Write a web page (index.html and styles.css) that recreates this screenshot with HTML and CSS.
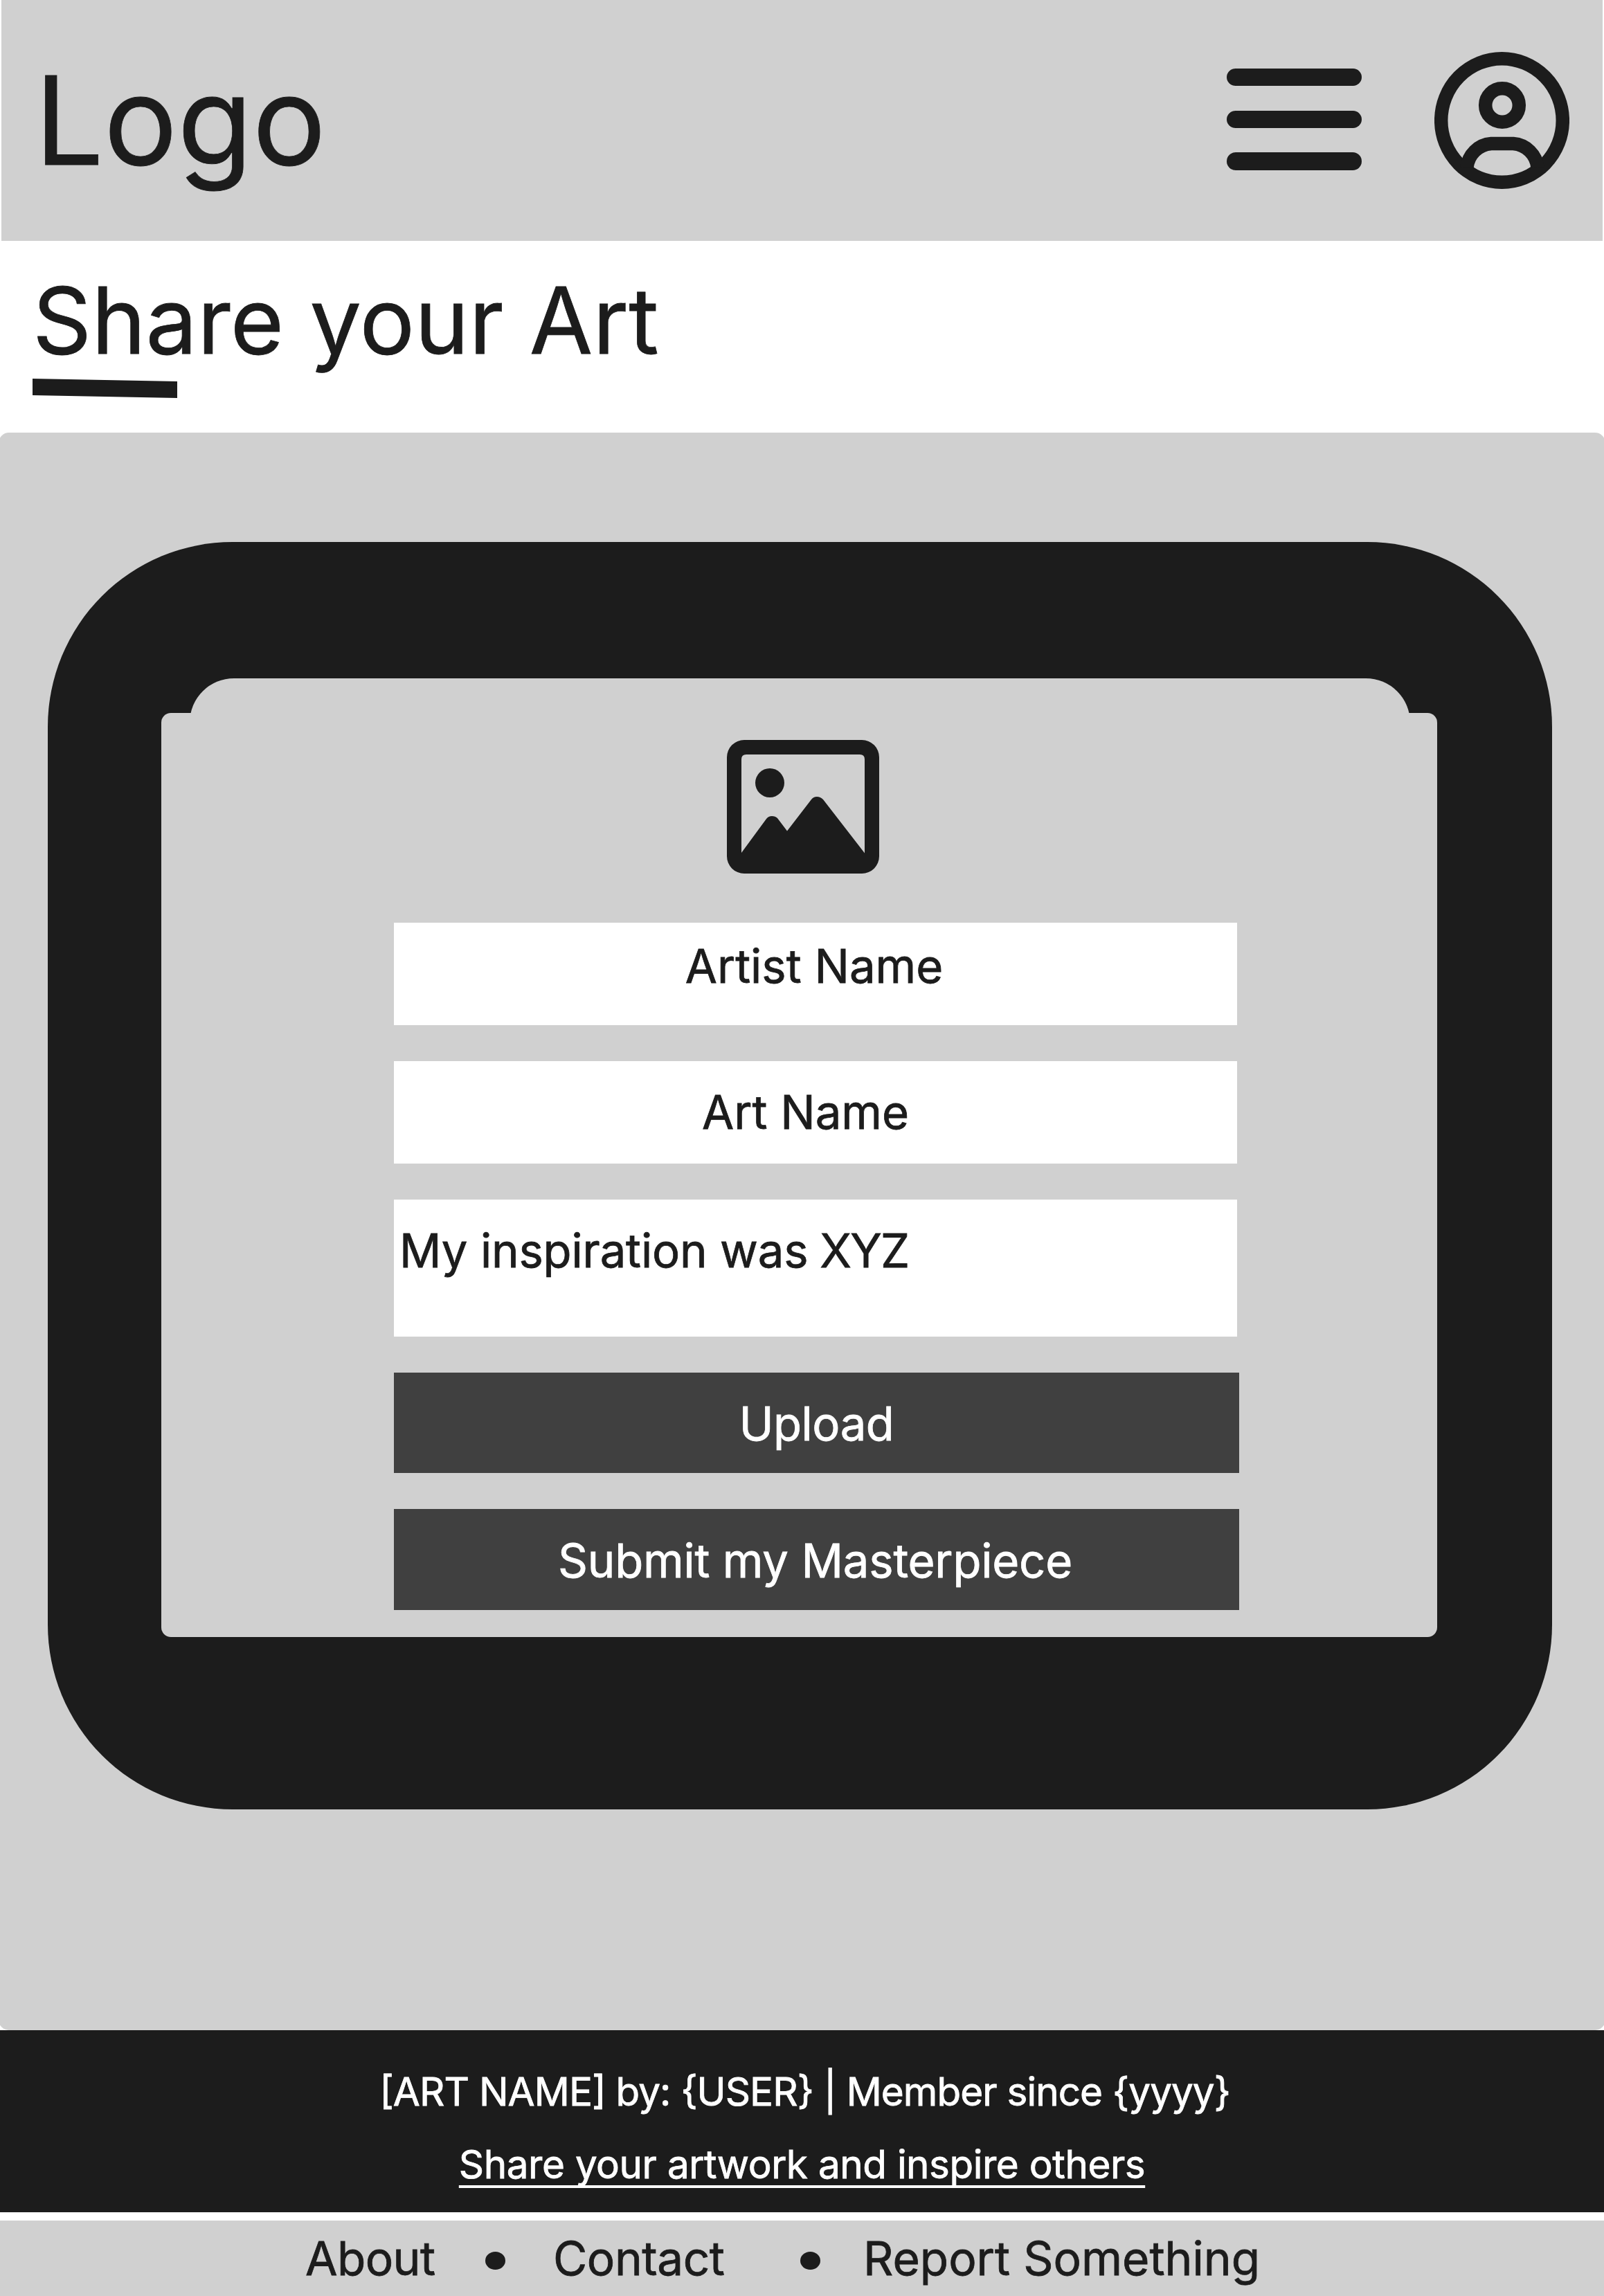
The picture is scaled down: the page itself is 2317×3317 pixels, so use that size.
FILE: index.html
```html
<!DOCTYPE html>
<html lang="en">
<head>
<meta charset="utf-8">
<title>Share your Art</title>
<link rel="stylesheet" href="styles.css">
</head>
<body>
<header class="header">
  <div class="logo">Logo</div>
  <nav class="header-nav">
    <svg class="icon-menu" viewBox="0 0 195 147" width="195" height="147" aria-label="Menu">
      <rect width="195" height="25" rx="12.5"/>
      <rect y="61" width="195" height="25" rx="12.5"/>
      <rect y="121" width="195" height="26" rx="13"/>
    </svg>
    <svg class="icon-user" viewBox="0 0 195 198" width="195" height="198" aria-label="Account">
      <ellipse cx="97.5" cy="99" rx="87.8" ry="89.2"/>
      <circle cx="98" cy="77" r="24.3"/>
      <path d="M47 167A38 38 0 0 1 82 132.5H114A38 38 0 0 1 149 167"/>
    </svg>
  </nav>
</header>

<section class="title">
  <h1 class="title-text">Share your Art</h1>
  <svg class="title-mark" viewBox="0 0 209 28" width="209" height="28"><path d="M0 0L209 4V28L0 24Z"/></svg>
</section>

<main class="stage">
  <div class="frame">
    <div class="frame-top"></div>
    <form class="panel">
      <svg class="icon-image" viewBox="0 0 220 193" width="220" height="193" aria-label="Artwork">
        <path fill-rule="evenodd" d="M25 0H195A25 25 0 0 1 220 25V168A25 25 0 0 1 195 193H25A25 25 0 0 1 0 168V25A25 25 0 0 1 25 0ZM28 21Q21 21 21 28V163L57 114Q60 110 65 110T73 113L87 131.500L122 86Q125 82 130 82T139 86L199 163.500V28Q199 21 192 21Z"/>
        <circle cx="62" cy="62" r="21"/>
      </svg>
      <div class="field field-artist">Artist Name</div>
      <div class="field field-art">Art Name</div>
      <div class="field field-note">My inspiration was <span class="tight">XYZ</span></div>
      <button class="button button-upload" type="button">Upload</button>
      <button class="button button-submit" type="button">Submit my Masterpiece</button>
    </form>
  </div>
</main>

<section class="credits">
  <p class="credit-line"><span class="caps">[ART NAME]</span> by: <span class="caps">{USER}</span> | Member since {yyyy}</p>
  <a class="credit-link">Share your artwork and inspire others</a>
</section>

<footer class="footer">
  <a class="footer-about">About</a>
  <span class="dot"></span>
  <a class="footer-contact">Contact</a>
  <span class="dot"></span>
  <a class="footer-report">Report Something</a>
</footer>
</body>
</html>
```

FILE: styles.css
```css
* { box-sizing: border-box; }

body {
  margin: 0;
  background: #fff;
  color: #1c1c1c;
  font-family: Inter, "Liberation Sans", sans-serif;
  font-weight: 400;
  -webkit-text-stroke: 0.8px currentColor;
}

svg { display: block; fill: #1c1c1c; }

.header {
  display: flex;
  justify-content: space-between;
  height: 348px;
  margin: 0 2px;
  padding: 0 48px;
  background: #d0d0d0;
}

.logo { font-size: 177px; line-height: 348px; }

.header-nav { display: flex; gap: 105px; }
.icon-menu { margin-top: 99px; }
.icon-user { margin-top: 75px; fill: none; stroke: #1c1c1c; stroke-width: 19.500px; }

.title { height: 277px; padding: 35px 47px 0; }
.title-text { margin: 0; font-size: 132.700px; font-weight: 400; line-height: 160px; }
.title-mark { margin-top: 4px; }

.stage {
  height: 2308px;
  margin: 0 -2px;
  padding: 158px 77px 0 71px;
  background: #d0d0d0;
  border-radius: 15px;
}

.frame {
  width: 2173px;
  height: 1831px;
  padding: 197px 166px 0 164px;
  background: #1c1c1c;
  border-radius: 267px;
}

.frame-top {
  height: 114px;
  margin: 0 39px -64px 41px;
  background: #d0d0d0;
  border-radius: 64px 64px 0 0;
}

.panel {
  display: flex;
  flex-direction: column;
  align-items: flex-start;
  height: 1335px;
  padding: 39px 0 0 336px;
  background: #d0d0d0;
  border-radius: 14px;
}
.panel > * { flex-shrink: 0; }

.icon-image { margin: 0 0 71px 481px; }

.field {
  width: 1218px;
  height: 148px;
  margin-bottom: 52px;
  background: #fff;
  font-size: 67px;
  line-height: 148px;
  text-align: center;
}
.field-artist { line-height: 126px; padding-right: 4px; }
.field-art { padding-right: 29px; }
.field-note { height: 198px; padding-left: 8px; text-align: left; letter-spacing: -0.150px; }
.tight { margin-left: -2px; letter-spacing: -1.700px; }

.button {
  width: 1221px;
  height: 145px;
  margin: 0 0 52px;
  padding: 2px 0 0;
  border: 0;
  background: #404040;
  color: #fff;
  font: 400 67px/143px Inter, "Liberation Sans", sans-serif;
  text-align: center;
}
.button-upload { letter-spacing: -0.500px; }
.button-submit { height: 146px; padding-right: 4px; letter-spacing: -0.200px; }

.credits {
  display: flex;
  flex-direction: column;
  align-items: center;
  height: 263px;
  padding-top: 49px;
  background: #1c1c1c;
  color: #fff;
  font-size: 56.600px;
  line-height: 80px;
}
.credit-line { margin: 0 0 25px; padding-left: 8px; letter-spacing: -0.950px; }
.caps { font-feature-settings: "case"; }
.credit-link {
  letter-spacing: -0.460px;
  text-decoration: underline;
  text-decoration-thickness: 4px;
  text-decoration-skip-ink: none;
  text-underline-offset: 10px;
}

.footer {
  display: flex;
  align-items: center;
  height: 109px;
  margin-top: 12px;
  padding-left: 441px;
  background: #d0d0d0;
  font-size: 67.500px;
}
.footer > * { flex-shrink: 0; }
.footer-about { width: 260px; letter-spacing: -0.600px; }
.footer-contact { width: 357px; margin-left: 69px; letter-spacing: -0.450px; }
.footer-report { margin-left: 62px; }
.dot { width: 29px; height: 26px; margin-top: 6px; border-radius: 50%; background: #1c1c1c; }
```
